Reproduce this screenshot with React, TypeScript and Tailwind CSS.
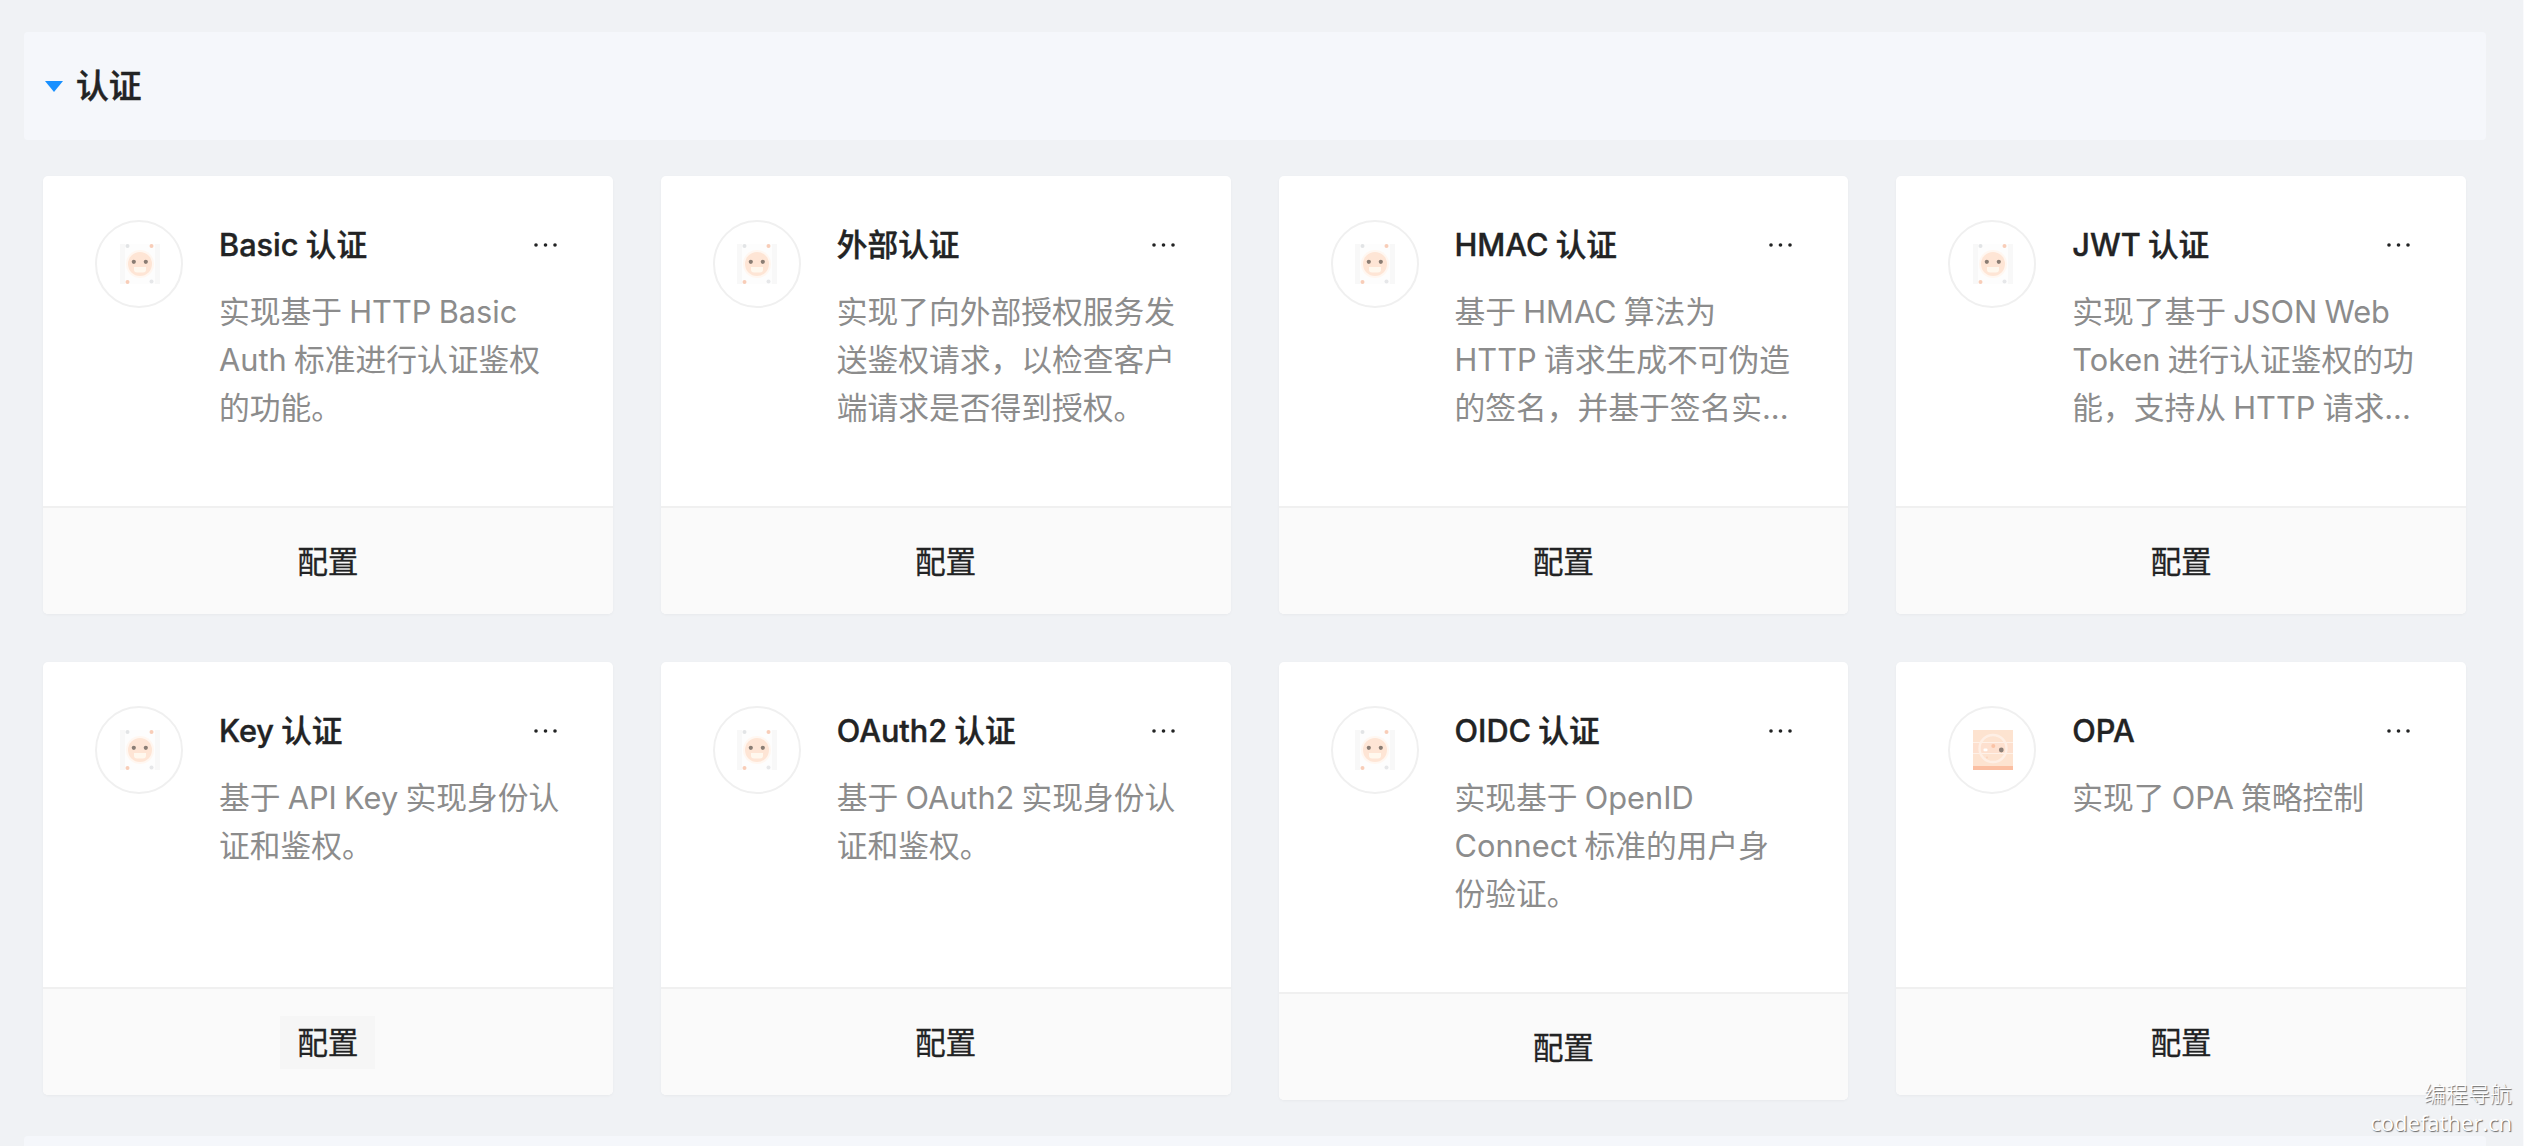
import clsx from 'clsx'

type Plugin = {
  title: string
  lines: string[]
  icon?: 'face' | 'opa'
  height: string
  active?: boolean
}

const plugins: Plugin[] = [
  { title: 'Basic 认证', lines: ['实现基于 HTTP Basic', 'Auth 标准进行认证鉴权', '的功能。'], height: 'h-[438px]' },
  { title: '外部认证', lines: ['实现了向外部授权服务发', '送鉴权请求，以检查客户', '端请求是否得到授权。'], height: 'h-[438px]' },
  { title: 'HMAC 认证', lines: ['基于 HMAC 算法为', 'HTTP 请求生成不可伪造', '的签名，并基于签名实...'], height: 'h-[438px]' },
  { title: 'JWT 认证', lines: ['实现了基于 JSON Web', 'Token 进行认证鉴权的功', '能，支持从 HTTP 请求...'], height: 'h-[438px]' },
  { title: 'Key 认证', lines: ['基于 API Key 实现身份认', '证和鉴权。'], height: 'h-[433px]', active: true },
  { title: 'OAuth2 认证', lines: ['基于 OAuth2 实现身份认', '证和鉴权。'], height: 'h-[433px]' },
  { title: 'OIDC 认证', lines: ['实现基于 OpenID', 'Connect 标准的用户身', '份验证。'], height: 'h-[438px]' },
  { title: 'OPA', lines: ['实现了 OPA 策略控制'], icon: 'opa', height: 'h-[433px]' },
]

function FaceIcon() {
  return (
    <svg className="ml-px" width="40" height="40" viewBox="0 0 40 40">
      <rect width="40" height="40" fill="#f8f8f8" />
      <rect x="5" width="30" height="40" fill="#fdfdfd" />
      <circle cx="20" cy="20" r="14" fill="#fff7f1" />
      <circle cx="20" cy="20" r="12" fill="#fee5d5" />
      <path d="M14 23h12v2.5a3 3 0 0 1-3 3h-6a3 3 0 0 1-3-3z" fill="#fff8ee" />
      <circle cx="13.8" cy="17.8" r="2.1" fill="#8a7d74" />
      <circle cx="25.8" cy="17.8" r="2.1" fill="#8a7d74" />
      <circle cx="31.5" cy="2" r="2" fill="#f8cdb8" />
      <circle cx="7.5" cy="38" r="2" fill="#f8cdb8" />
      <circle cx="7.5" cy="2" r="2" fill="#e2e4e6" />
      <circle cx="31.5" cy="37.5" r="2" fill="#e6e7e9" />
    </svg>
  )
}

function OpaIcon() {
  return (
    <svg className="ml-px" width="40" height="40" viewBox="0 0 40 40">
      <rect width="40" height="40" fill="#fde3d0" />
      <rect y="13" width="40" height="10.5" fill="#fde0cf" />
      <path d="M0 12.5h40M0 23.5h40" stroke="#fef1e8" strokeWidth="1.2" />
      <circle cx="20" cy="18.5" r="13.5" fill="none" stroke="#feefe5" strokeWidth="2.4" />
      <rect y="36" width="40" height="4" fill="#fbbfa2" />
      <circle cx="20.3" cy="16" r="2" fill="#fac3a6" />
      <circle cx="28.3" cy="20" r="2.4" fill="#8d8078" />
      <rect x="10.5" y="18.5" width="4" height="2.8" rx="1" fill="#fff" />
      <circle cx="14" cy="27.5" r="1" fill="#fbd3bd" />
    </svg>
  )
}

function PluginCard({ title, lines, icon, height, active }: Plugin) {
  return (
    <div className={clsx('flex flex-col rounded-[5px] bg-white shadow-[0_1px_3px_rgba(0,0,0,0.04)] overflow-hidden', height)}>
      <div className="flex flex-1 px-[52px] pt-[44px]">
        <div className="flex h-[88px] w-[88px] shrink-0 items-center justify-center rounded-full border-2 border-[#f0f0f0]">
          {icon === 'opa' ? <OpaIcon /> : <FaceIcon />}
        </div>
        <div className="ml-9 flex-1 pt-px">
          <div className="flex h-12 items-center justify-between">
            <div className="whitespace-nowrap text-[30.7px] font-medium leading-[48px] text-[#222324] [word-spacing:-1px] [-webkit-text-stroke:0.4px_#222324]">
              {title}
            </div>
            <svg className="mr-px" width="28" height="6" viewBox="0 0 28 6" fill="#222324">
              <circle cx="4" cy="3" r="1.8" />
              <circle cx="13.5" cy="3" r="1.8" />
              <circle cx="23" cy="3" r="1.8" />
            </svg>
          </div>
          <div className="mt-[18.5px] text-[30.75px] leading-[48.3px] text-[#8c8c8c] [word-spacing:-1.4px]">
            {lines.map((line) => (
              <div key={line} className="whitespace-nowrap">{line}</div>
            ))}
          </div>
        </div>
      </div>
      <div className="flex h-[108px] shrink-0 items-center justify-center border-t-2 border-[#f0f0f0] bg-[#fafafa]">
        <button
          className={clsx(
            'h-[53px] w-[95px] text-[30.7px] leading-[53px] text-[#222324] [-webkit-text-stroke:0.3px_#222324]',
            active && 'bg-[#f6f6f6]'
          )}
        >
          配置
        </button>
      </div>
    </div>
  )
}

export default function App() {
  return (
    <div className="relative h-[1146px] w-[2524px] overflow-hidden border-r border-[#fafafc] bg-[#f0f2f5] pt-8 font-['Inter','Noto_Sans_CJK_SC',sans-serif]">
      <div className="ml-6 flex h-[108px] w-[2462px] items-center rounded-[4px] bg-[#f5f7fb] pl-[21px]">
        <svg width="18" height="11" viewBox="0 0 18 11">
          <path d="M0 0h18L9 11z" fill="#1890ff" />
        </svg>
        <div className="ml-[13px] text-[32.8px] font-medium leading-[52px] text-[#222324] [-webkit-text-stroke:0.5px_#222324]">认证</div>
      </div>

      <div className="ml-[43px] mt-9 grid w-[2423px] grid-cols-4 items-start gap-12">
        {plugins.map((plugin) => (
          <PluginCard key={plugin.title} {...plugin} />
        ))}
      </div>

      <div className="ml-6 mt-9 h-[108px] w-[2462px] rounded-[4px] bg-[#f5f7fb]" />

      <div className="absolute bottom-[10px] right-[11px] text-right font-['Open_Sans','Noto_Sans_CJK_SC',sans-serif] text-[22px] font-light leading-[28.5px] text-white [text-shadow:1px_1px_1px_#666]">
        <div>编程导航</div>
        <div className="font-normal">codefather.cn</div>
      </div>
    </div>
  )
}
